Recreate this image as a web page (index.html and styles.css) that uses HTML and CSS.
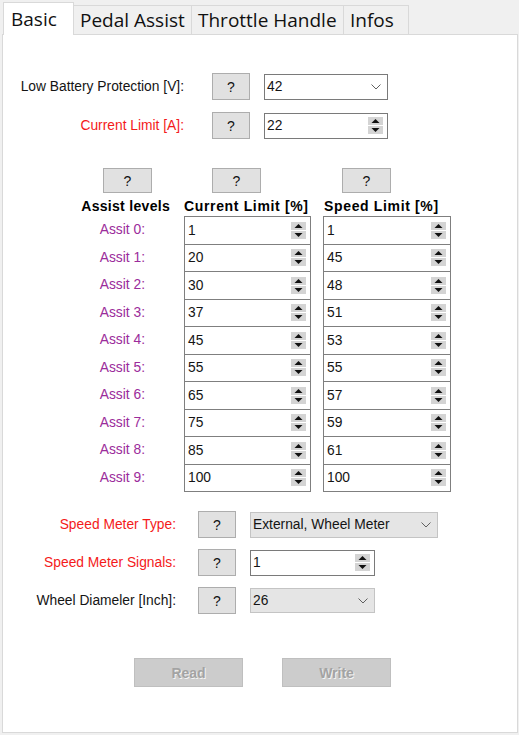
FILE: index.html
```html
<!DOCTYPE html>
<html>
<head>
<meta charset="utf-8">
<link rel="stylesheet" href="styles.css">
</head>
<body>
<div class="app">
  <div class="tabs">
    <div class="tab active w1">Basic</div>
    <div class="tab w2">Pedal Assist</div>
    <div class="tab w3">Throttle Handle</div>
    <div class="tab w4">Infos</div>
  </div>
  <div class="panel">
    <div class="form form-top">
      <div class="row">
        <span class="lbl">Low Battery Protection [V]:</span>
        <button class="help">?</button>
        <div class="field combo white w124"><span>42</span>
          <svg class="chev" width="10" height="6" viewBox="0 0 10 6"><polyline points="0.5,0.5 5,5 9.5,0.5" fill="none" stroke="#606060" stroke-width="1"/></svg>
        </div>
      </div>
      <div class="row">
        <span class="lbl red">Current Limit [A]:</span>
        <button class="help">?</button>
        <div class="field spinbox w124"><span>22</span>
          <svg class="spin" width="15" height="17" viewBox="0 0 15 17"><rect x="0" y="0" width="15" height="8" fill="#d4d4d4"/><rect x="0" y="9" width="15" height="8" fill="#d4d4d4"/><polygon points="3.5,6 7.5,2 11.5,6" fill="#111"/><polygon points="3.5,11 7.5,15 11.5,11" fill="#111"/></svg>
        </div>
      </div>
    </div>

    <div class="assist">
      <div class="hcell h1"><button class="help wide">?</button></div>
      <div class="hcell h2"><button class="help wide">?</button></div>
      <div class="hcell h3"><button class="help wide">?</button></div>

      <div class="head head-a">Assist levels</div>
      <div class="head">Current Limit [%]</div>
      <div class="head head-c">Speed Limit [%]</div>

      <div class="alabel">Assit 0:</div>
      <div class="cell b"><span>1</span><svg class="spin" width="15" height="17" viewBox="0 0 15 17"><rect x="0" y="0" width="15" height="8" fill="#d4d4d4"/><rect x="0" y="9" width="15" height="8" fill="#d4d4d4"/><polygon points="3.5,6 7.5,2 11.5,6" fill="#111"/><polygon points="3.5,11 7.5,15 11.5,11" fill="#111"/></svg></div>
      <div class="cell c"><span>1</span><svg class="spin" width="15" height="17" viewBox="0 0 15 17"><rect x="0" y="0" width="15" height="8" fill="#d4d4d4"/><rect x="0" y="9" width="15" height="8" fill="#d4d4d4"/><polygon points="3.5,6 7.5,2 11.5,6" fill="#111"/><polygon points="3.5,11 7.5,15 11.5,11" fill="#111"/></svg></div>

      <div class="alabel">Assit 1:</div>
      <div class="cell b"><span>20</span><svg class="spin" width="15" height="17" viewBox="0 0 15 17"><rect x="0" y="0" width="15" height="8" fill="#d4d4d4"/><rect x="0" y="9" width="15" height="8" fill="#d4d4d4"/><polygon points="3.5,6 7.5,2 11.5,6" fill="#111"/><polygon points="3.5,11 7.5,15 11.5,11" fill="#111"/></svg></div>
      <div class="cell c"><span>45</span><svg class="spin" width="15" height="17" viewBox="0 0 15 17"><rect x="0" y="0" width="15" height="8" fill="#d4d4d4"/><rect x="0" y="9" width="15" height="8" fill="#d4d4d4"/><polygon points="3.5,6 7.5,2 11.5,6" fill="#111"/><polygon points="3.5,11 7.5,15 11.5,11" fill="#111"/></svg></div>

      <div class="alabel">Assit 2:</div>
      <div class="cell b"><span>30</span><svg class="spin" width="15" height="17" viewBox="0 0 15 17"><rect x="0" y="0" width="15" height="8" fill="#d4d4d4"/><rect x="0" y="9" width="15" height="8" fill="#d4d4d4"/><polygon points="3.5,6 7.5,2 11.5,6" fill="#111"/><polygon points="3.5,11 7.5,15 11.5,11" fill="#111"/></svg></div>
      <div class="cell c"><span>48</span><svg class="spin" width="15" height="17" viewBox="0 0 15 17"><rect x="0" y="0" width="15" height="8" fill="#d4d4d4"/><rect x="0" y="9" width="15" height="8" fill="#d4d4d4"/><polygon points="3.5,6 7.5,2 11.5,6" fill="#111"/><polygon points="3.5,11 7.5,15 11.5,11" fill="#111"/></svg></div>

      <div class="alabel">Assit 3:</div>
      <div class="cell b"><span>37</span><svg class="spin" width="15" height="17" viewBox="0 0 15 17"><rect x="0" y="0" width="15" height="8" fill="#d4d4d4"/><rect x="0" y="9" width="15" height="8" fill="#d4d4d4"/><polygon points="3.5,6 7.5,2 11.5,6" fill="#111"/><polygon points="3.5,11 7.5,15 11.5,11" fill="#111"/></svg></div>
      <div class="cell c"><span>51</span><svg class="spin" width="15" height="17" viewBox="0 0 15 17"><rect x="0" y="0" width="15" height="8" fill="#d4d4d4"/><rect x="0" y="9" width="15" height="8" fill="#d4d4d4"/><polygon points="3.5,6 7.5,2 11.5,6" fill="#111"/><polygon points="3.5,11 7.5,15 11.5,11" fill="#111"/></svg></div>

      <div class="alabel">Assit 4:</div>
      <div class="cell b"><span>45</span><svg class="spin" width="15" height="17" viewBox="0 0 15 17"><rect x="0" y="0" width="15" height="8" fill="#d4d4d4"/><rect x="0" y="9" width="15" height="8" fill="#d4d4d4"/><polygon points="3.5,6 7.5,2 11.5,6" fill="#111"/><polygon points="3.5,11 7.5,15 11.5,11" fill="#111"/></svg></div>
      <div class="cell c"><span>53</span><svg class="spin" width="15" height="17" viewBox="0 0 15 17"><rect x="0" y="0" width="15" height="8" fill="#d4d4d4"/><rect x="0" y="9" width="15" height="8" fill="#d4d4d4"/><polygon points="3.5,6 7.5,2 11.5,6" fill="#111"/><polygon points="3.5,11 7.5,15 11.5,11" fill="#111"/></svg></div>

      <div class="alabel">Assit 5:</div>
      <div class="cell b"><span>55</span><svg class="spin" width="15" height="17" viewBox="0 0 15 17"><rect x="0" y="0" width="15" height="8" fill="#d4d4d4"/><rect x="0" y="9" width="15" height="8" fill="#d4d4d4"/><polygon points="3.5,6 7.5,2 11.5,6" fill="#111"/><polygon points="3.5,11 7.5,15 11.5,11" fill="#111"/></svg></div>
      <div class="cell c"><span>55</span><svg class="spin" width="15" height="17" viewBox="0 0 15 17"><rect x="0" y="0" width="15" height="8" fill="#d4d4d4"/><rect x="0" y="9" width="15" height="8" fill="#d4d4d4"/><polygon points="3.5,6 7.5,2 11.5,6" fill="#111"/><polygon points="3.5,11 7.5,15 11.5,11" fill="#111"/></svg></div>

      <div class="alabel">Assit 6:</div>
      <div class="cell b"><span>65</span><svg class="spin" width="15" height="17" viewBox="0 0 15 17"><rect x="0" y="0" width="15" height="8" fill="#d4d4d4"/><rect x="0" y="9" width="15" height="8" fill="#d4d4d4"/><polygon points="3.5,6 7.5,2 11.5,6" fill="#111"/><polygon points="3.5,11 7.5,15 11.5,11" fill="#111"/></svg></div>
      <div class="cell c"><span>57</span><svg class="spin" width="15" height="17" viewBox="0 0 15 17"><rect x="0" y="0" width="15" height="8" fill="#d4d4d4"/><rect x="0" y="9" width="15" height="8" fill="#d4d4d4"/><polygon points="3.5,6 7.5,2 11.5,6" fill="#111"/><polygon points="3.5,11 7.5,15 11.5,11" fill="#111"/></svg></div>

      <div class="alabel">Assit 7:</div>
      <div class="cell b"><span>75</span><svg class="spin" width="15" height="17" viewBox="0 0 15 17"><rect x="0" y="0" width="15" height="8" fill="#d4d4d4"/><rect x="0" y="9" width="15" height="8" fill="#d4d4d4"/><polygon points="3.5,6 7.5,2 11.5,6" fill="#111"/><polygon points="3.5,11 7.5,15 11.5,11" fill="#111"/></svg></div>
      <div class="cell c"><span>59</span><svg class="spin" width="15" height="17" viewBox="0 0 15 17"><rect x="0" y="0" width="15" height="8" fill="#d4d4d4"/><rect x="0" y="9" width="15" height="8" fill="#d4d4d4"/><polygon points="3.5,6 7.5,2 11.5,6" fill="#111"/><polygon points="3.5,11 7.5,15 11.5,11" fill="#111"/></svg></div>

      <div class="alabel">Assit 8:</div>
      <div class="cell b"><span>85</span><svg class="spin" width="15" height="17" viewBox="0 0 15 17"><rect x="0" y="0" width="15" height="8" fill="#d4d4d4"/><rect x="0" y="9" width="15" height="8" fill="#d4d4d4"/><polygon points="3.5,6 7.5,2 11.5,6" fill="#111"/><polygon points="3.5,11 7.5,15 11.5,11" fill="#111"/></svg></div>
      <div class="cell c"><span>61</span><svg class="spin" width="15" height="17" viewBox="0 0 15 17"><rect x="0" y="0" width="15" height="8" fill="#d4d4d4"/><rect x="0" y="9" width="15" height="8" fill="#d4d4d4"/><polygon points="3.5,6 7.5,2 11.5,6" fill="#111"/><polygon points="3.5,11 7.5,15 11.5,11" fill="#111"/></svg></div>

      <div class="alabel">Assit 9:</div>
      <div class="cell b"><span>100</span><svg class="spin" width="15" height="17" viewBox="0 0 15 17"><rect x="0" y="0" width="15" height="8" fill="#d4d4d4"/><rect x="0" y="9" width="15" height="8" fill="#d4d4d4"/><polygon points="3.5,6 7.5,2 11.5,6" fill="#111"/><polygon points="3.5,11 7.5,15 11.5,11" fill="#111"/></svg></div>
      <div class="cell c"><span>100</span><svg class="spin" width="15" height="17" viewBox="0 0 15 17"><rect x="0" y="0" width="15" height="8" fill="#d4d4d4"/><rect x="0" y="9" width="15" height="8" fill="#d4d4d4"/><polygon points="3.5,6 7.5,2 11.5,6" fill="#111"/><polygon points="3.5,11 7.5,15 11.5,11" fill="#111"/></svg></div>
    </div>

    <div class="form form-bottom">
      <div class="row">
        <span class="lbl lbl-b red">Speed Meter Type:</span>
        <button class="help help-b">?</button>
        <div class="field combo gray w188"><span>External, Wheel Meter</span>
          <svg class="chev" width="10" height="6" viewBox="0 0 10 6"><polyline points="0.5,0.5 5,5 9.5,0.5" fill="none" stroke="#606060" stroke-width="1"/></svg>
        </div>
      </div>
      <div class="row">
        <span class="lbl lbl-b red">Speed Meter Signals:</span>
        <button class="help help-b">?</button>
        <div class="field spinbox w125"><span>1</span>
          <svg class="spin" width="15" height="17" viewBox="0 0 15 17"><rect x="0" y="0" width="15" height="8" fill="#d4d4d4"/><rect x="0" y="9" width="15" height="8" fill="#d4d4d4"/><polygon points="3.5,6 7.5,2 11.5,6" fill="#111"/><polygon points="3.5,11 7.5,15 11.5,11" fill="#111"/></svg>
        </div>
      </div>
      <div class="row">
        <span class="lbl lbl-b">Wheel Diameler [Inch]:</span>
        <button class="help help-b">?</button>
        <div class="field combo gray w125 short"><span>26</span>
          <svg class="chev" width="10" height="6" viewBox="0 0 10 6"><polyline points="0.5,0.5 5,5 9.5,0.5" fill="none" stroke="#606060" stroke-width="1"/></svg>
        </div>
      </div>
    </div>

    <div class="actions">
      <button class="action read">Read</button>
      <button class="action write">Write</button>
    </div>
  </div>
</div>
</body>
</html>
```

FILE: styles.css
```css
* { box-sizing: border-box; }

body {
  margin: 0;
  background: #f0f0f0;
  font-family: "Liberation Sans", Arial, sans-serif;
  font-size: 13.8px;
  color: #141414;
}

.app {
  width: 519px;
  height: 735px;
  padding: 0 1px 0 2px;
}

/* Tabs */
.tabs {
  display: flex;
  align-items: flex-end;
  height: 34px;
  padding-left: 1px;
}

.tab {
  height: 29px;
  display: flex;
  align-items: center;
  justify-content: flex-start;
  padding-left: 6px;
  border: 1px solid #d9d9d9;
  border-bottom: none;
  background: #f0f0f0;
  margin-left: -1px;
  font-family: "Open Sans", "Noto Sans", sans-serif;
  font-size: 19px;
  color: #111;
  padding-bottom: 1px;
  white-space: nowrap;
}

.tab.active {
  height: 33px;
  margin-left: 0;
  margin-bottom: -1px;
  background: #fff;
  position: relative;
  z-index: 1;
  padding-left: 7px;
  padding-top: 1px;
  padding-bottom: 2px;
}

.w1 { width: 71px; }
.w2 { width: 119px; }
.w3 { width: 153px; }
.w4 { width: 66px; }

/* Panel */
.panel {
  width: 516px;
  height: 699px;
  border: 1px solid #d9d9d9;
  background: #fff;
  padding-top: 38px;
}

.form {
  display: flex;
  flex-direction: column;
}

.form-top { gap: 12px; }

.form-bottom {
  gap: 11px;
  margin-top: 20px;
}

.row {
  display: flex;
  align-items: center;
  height: 27px;
}

.lbl {
  width: 181px;
  text-align: right;
  white-space: nowrap;
}

.lbl-b { width: 173px; }

.red { color: #f41a1a; }

.help {
  width: 38px;
  height: 27px;
  margin: 0 0 0 28px;
  padding: 0;
  border: 1px solid #adadad;
  background: #e1e1e1;
  font-family: "Liberation Sans", Arial, sans-serif;
  font-size: 14px;
  color: #111;
}

.help-b { margin-left: 22px; }

.field {
  margin-left: 14px;
  height: 26px;
  display: flex;
  align-items: center;
  justify-content: space-between;
  padding: 0 6px 0 2px;
  border: 1px solid #7a7a7a;
  background: #fff;
}

.w124 { width: 124px; }
.w125 { width: 125px; }
.w188 { width: 188px; }

.combo.gray {
  background: #e5e5e5;
  border-color: #c4c4c4;
}

.short { height: 25px; }

.spinbox { padding-right: 4px; }

.spin { display: block; flex: none; }
.chev { display: block; flex: none; }

/* Assist grid */
.assist {
  margin-top: 29px;
  display: grid;
  grid-template-columns: 181px 139px 128px;
  grid-template-rows: 25px 23px repeat(10, 27.5px);
}

.hcell { display: flex; }

.help.wide {
  width: 49px;
  height: 25px;
}

.h1 .help { margin-left: 100px; }
.h2 .help { margin-left: 28px; }
.h3 .help { margin-left: 19px; }

.head {
  align-self: end;
  font-size: 14px;
  font-weight: bold;
  letter-spacing: 0.65px;
  line-height: 18px;
  padding-bottom: 1px;
  color: #000;
  white-space: nowrap;
}

.head-a {
  text-align: right;
  padding-right: 14px;
  letter-spacing: 0.3px;
}

.head-c { padding-left: 1px; }

.alabel {
  text-align: right;
  padding-right: 39px;
  color: #9b2c9b;
  display: flex;
  align-items: center;
  justify-content: flex-end;
}

.cell {
  height: 28.5px;
  display: flex;
  align-items: center;
  justify-content: space-between;
  padding: 0 4px 0 3px;
  border: 1px solid #7f7f7f;
  background: #fff;
}

.cell.b { width: 127px; }
.cell.c { width: 128px; }

/* Actions */
.actions {
  display: flex;
  margin-top: 44px;
  padding-left: 131px;
  gap: 39px;
}

.action {
  width: 109px;
  height: 29px;
  padding: 0;
  border: 1px solid #bfbfbf;
  background: #cccccc;
  font-family: "Liberation Sans", Arial, sans-serif;
  font-size: 14px;
  font-weight: bold;
  color: #a3a3a3;
  text-shadow: 1px 1px 0 #f4f4f4;
}
```
